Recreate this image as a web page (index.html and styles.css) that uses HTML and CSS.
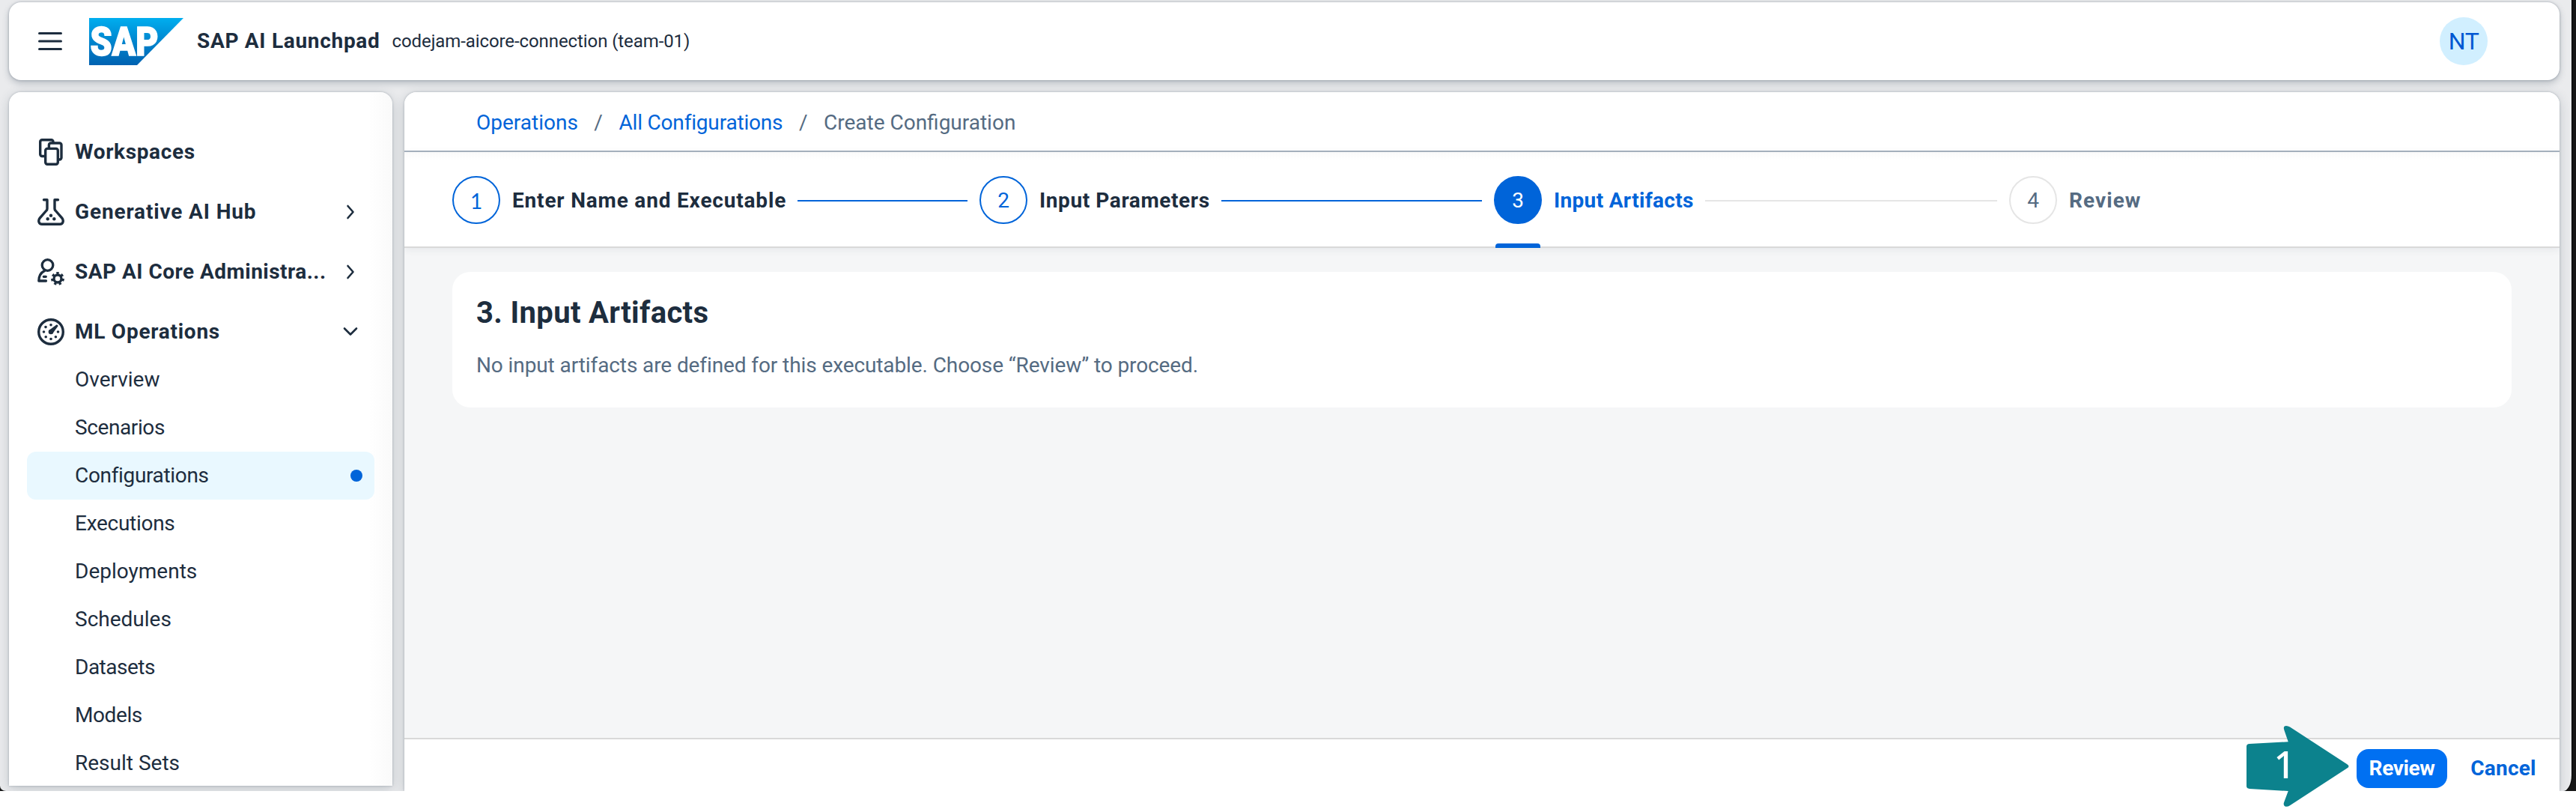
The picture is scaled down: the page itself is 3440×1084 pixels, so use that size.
FILE: index.html
```html
<!DOCTYPE html>
<html lang="en">
<head>
<meta charset="utf-8">
<title>SAP AI Launchpad</title>
<link rel="stylesheet" href="styles.css">
</head>
<body>
<div class="desktop">
  <div class="window">
    <header class="shellbar">
      <svg class="menu-icon" width="32" height="26" viewBox="0 0 32 26"><path d="M1.5 2.5h29M1.5 13h29M1.5 23.5h29" fill="none" stroke="#1d2d3e" stroke-width="3" stroke-linecap="round"/></svg>
      <svg class="logo" width="126" height="63" viewBox="0 0 126 63">
        <defs><linearGradient id="sap" x1="0" y1="0" x2="0" y2="1"><stop offset="0" stop-color="#00aeef"/><stop offset=".5" stop-color="#0085ce"/><stop offset="1" stop-color="#0062b1"/></linearGradient></defs>
        <path d="M0 0H126L64 63H0Z" fill="url(#sap)"/>
        <text class="logo-text" x="1.5" y="50" textLength="91" lengthAdjust="spacingAndGlyphs">SAP</text>
      </svg>
      <h1 class="product">SAP AI Launchpad</h1>
      <span class="tenant">codejam-aicore-connection (team-01)</span>
      <span class="avatar">NT</span>
    </header>

    <div class="body">
      <nav class="sidebar">
        <div class="group workspaces">
          <svg class="icon" viewBox="0 0 36 36"><g fill="#fff" stroke="#1d2d3e" stroke-width="3.4"><rect x="3.7" y="1.7" width="17.3" height="21.8" rx="2.5"/><rect x="15.4" y="6" width="16.6" height="22" rx="2.5"/><rect x="10.7" y="13.4" width="16.6" height="20.9" rx="2.5"/></g></svg>
          <span>Workspaces</span>
        </div>
        <div class="group genai">
          <svg class="icon" viewBox="0 0 36 36"><path d="M8.500 1.800H13V13.500Q13 15 12 16L3.200 26.200C.5 29.500 1.800 34.200 6 34.200H30C34.200 34.200 35.500 29.500 32.800 26.200L24 16Q23 15 23 13.500V1.800H27.500" fill="none" stroke="#1d2d3e" stroke-width="3.4" stroke-linecap="round" stroke-linejoin="round"/><g fill="#1d2d3e"><circle cx="18" cy="22.700" r="2.200"/><circle cx="13.700" cy="27.300" r="2.200"/><circle cx="22.300" cy="27.300" r="2.200"/></g></svg>
          <span>Generative AI Hub</span>
          <svg class="chevron" viewBox="0 0 20 20"><path d="M6.500 2L13.500 10L6.500 18"/></svg>
        </div>
        <div class="group admin">
          <svg class="icon" viewBox="0 0 36 36"><g fill="none" stroke="#1d2d3e" stroke-width="3.300" stroke-linecap="round" stroke-linejoin="round"><circle cx="13.500" cy="9" r="7.300"/><path d="M9.500 16.500C4.500 19 1.800 23.500 1.800 30H11.500M8.300 24.300H11.300"/></g><g fill="none" stroke="#1d2d3e"><circle cx="27" cy="27" r="5" stroke-width="3.400"/><circle cx="27" cy="27" r="7.300" stroke-width="3.200" pathLength="14" stroke-dasharray="1 1" transform="rotate(-102.860 27 27)"/></g></svg>
          <span>SAP AI Core Administra...</span>
          <svg class="chevron" viewBox="0 0 20 20"><path d="M6.500 2L13.500 10L6.500 18"/></svg>
        </div>
        <div class="group mlops">
          <svg class="icon" viewBox="0 0 36 36"><circle cx="18" cy="18" r="16.300" fill="none" stroke="#1d2d3e" stroke-width="3.400"/><g fill="#1d2d3e"><circle cx="18" cy="8.700" r="1.800"/><circle cx="11" cy="11.600" r="1.800"/><circle cx="8.500" cy="18" r="1.800"/><circle cx="11.200" cy="24.700" r="1.800"/><circle cx="18" cy="27.500" r="1.800"/><circle cx="24.400" cy="24.700" r="1.800"/><circle cx="27.500" cy="18" r="1.800"/><circle cx="18" cy="18" r="3.300"/><path d="M15.800 15.800L25.400 8.600Q27.800 8.400 27.400 10.600L20.200 20.200Z"/></g></svg>
          <span>ML Operations</span>
          <svg class="chevron" viewBox="0 0 20 20"><path d="M2 5.500L10 13.500L18 5.500"/></svg>
        </div>
        <ul class="items">
          <li>Overview</li>
          <li>Scenarios</li>
          <li class="selected">Configurations<i class="dot"></i></li>
          <li>Executions</li>
          <li>Deployments</li>
          <li>Schedules</li>
          <li>Datasets</li>
          <li>Models</li>
          <li>Result Sets</li>
        </ul>
      </nav>

      <main class="main">
        <div class="breadcrumb">
          <a>Operations</a><span>/</span><a>All Configurations</a><span>/</span><span>Create Configuration</span>
        </div>
        <div class="wizard">
          <div class="step done"><span class="num one">1</span><b class="label enter">Enter Name and Executable</b><i class="line"></i></div>
          <div class="step done"><span class="num">2</span><b class="label params">Input Parameters</b><i class="line"></i></div>
          <div class="step current"><span class="num">3</span><b class="label artifacts">Input Artifacts</b><i class="line"></i></div>
          <div class="step todo"><span class="num">4</span><b class="label review">Review</b></div>
        </div>
        <div class="content">
          <section class="card">
            <h2>3. Input Artifacts</h2>
            <p>No input artifacts are defined for this executable. Choose “Review” to proceed.</p>
          </section>
        </div>
        <footer class="footer">
          <button class="btn primary">Review</button>
          <button class="btn plain">Cancel</button>
        </footer>
      </main>
    </div>
  </div>
</div>
<svg class="callout" width="137" height="108" viewBox="0 0 137 108">
  <path d="M4 24L55.700 21.300L50.300 5.500Q48.500 0 53 0Q55.500 0 58 1.600L134 51Q139 53.900 134 56.800L58 106.200Q54.500 108.500 51.500 107.500Q48.500 106 50.300 101.500L55.700 87L4 84Q0 83.500 0 80.500V27.500Q0 24.300 4 24Z" fill="#0c828d"/>
  <text x="36.500" y="69.600">1</text>
</svg>
</body>
</html>
```
FILE: styles.css
```css
* { box-sizing: border-box; }

body {
  margin: 0;
  height: 1084px;
  overflow: hidden;
  background: #fff;
  color: #1d2d3e;
  font-family: Roboto, "Liberation Sans", sans-serif;
  font-size: 28px;
  line-height: 32px;
}

h1, h2, p, ul { margin: 0; padding: 0; }

.desktop {
  height: 1056px;
  padding-right: 6px;
  background: #161616;
}

.window {
  height: 1056px;
  padding: 3px 16px 0 12px;
  display: flex;
  flex-direction: column;
  gap: 16px;
  overflow: hidden;
  background: #eaebed;
  border-radius: 0 0 11px 8px / 0 0 21px 7px;
  box-shadow: 1px 0 0 #000;
}

.shellbar {
  flex: none;
  height: 104px;
  padding: 0 96px 0 39px;
  display: flex;
  align-items: center;
  background: #fff;
  border-radius: 16px;
  box-shadow: 0 0 3px rgba(34, 53, 72, .35), 0 4px 10px rgba(34, 53, 72, .26);
}

.logo { margin-left: 36px; }

.logo-text {
  font-size: 53px;
  font-weight: 900;
  fill: #fff;
  stroke: #fff;
  stroke-width: 1.6px;
}

.product {
  margin-left: 18px;
  font-size: 28px;
  font-weight: 700;
  letter-spacing: .7px;
}

.tenant {
  margin-left: 16px;
  font-size: 24px;
  letter-spacing: -.09px;
}

.avatar {
  width: 64px;
  height: 64px;
  margin-left: auto;
  border-radius: 50%;
  background: #d1efff;
  color: #0057d2;
  font-size: 32px;
  line-height: 64px;
  text-align: center;
  letter-spacing: -.5px;
}

.body {
  flex: 1;
  display: flex;
  align-items: flex-start;
  gap: 16px;
}

.sidebar {
  width: 512px;
  height: 926px;
  padding: 48px 24px 0;
  overflow: hidden;
  background: linear-gradient(to right, #fff 480px, #fafafa);
  border-radius: 16px 16px 0 0;
  box-shadow: 0 0 3px rgba(34, 53, 72, .3), 0 4px 16px rgba(34, 53, 72, .2);
}

.group {
  height: 64px;
  margin-bottom: 16px;
  padding: 0 22px 0 14px;
  display: flex;
  align-items: center;
  font-weight: 700;
}

.group.mlops { margin-bottom: 0; letter-spacing: .74px; }
.group.workspaces { letter-spacing: .64px; }
.group.genai { letter-spacing: .85px; }
.group.admin { letter-spacing: .48px; }

.icon {
  width: 36px;
  height: 36px;
  margin-right: 14px;
}

.chevron {
  width: 20px;
  height: 20px;
  margin-left: auto;
  fill: none;
  stroke: #1d2d3e;
  stroke-width: 2.6;
  stroke-linecap: round;
  stroke-linejoin: round;
}

.items { list-style: none; }

.items li {
  height: 64px;
  padding: 0 16px 0 64px;
  display: flex;
  align-items: center;
  justify-content: space-between;
  border-radius: 12px;
}

.items .selected { background: #e9f8ff; }
.items li:nth-child(2) { letter-spacing: -.4px; }
.items li:nth-child(3) { letter-spacing: -.34px; }
.items li:nth-child(4) { letter-spacing: -.28px; }
.items li:nth-child(7) { letter-spacing: -.5px; }
.items li:nth-child(8) { letter-spacing: -.4px; }

.dot {
  width: 16px;
  height: 16px;
  border-radius: 50%;
  background: #0064d9;
}

.main {
  flex: 1;
  height: 933px;
  display: flex;
  flex-direction: column;
  overflow: hidden;
  background: #f5f6f7;
  border-radius: 16px 16px 0 0;
  box-shadow: 0 0 3px rgba(34, 53, 72, .3), 0 4px 16px rgba(34, 53, 72, .2);
}

.breadcrumb {
  height: 80px;
  padding: 4px 96px 0;
  display: flex;
  align-items: center;
  gap: 21.5px;
  background: #fff;
  border-bottom: 2px solid #a8b3bf;
  color: #556b82;
}

.breadcrumb a { color: #0064d9; }
.breadcrumb a:nth-of-type(2) { letter-spacing: -.18px; }

.wizard {
  height: 128px;
  padding-left: 64px;
  display: grid;
  grid-template-columns: 704px 687px 688px 1fr;
  background: linear-gradient(#fafafa, #fff 10px);
  border-bottom: 2px solid #d9d9d9;
  box-shadow: 0 2px 10px rgba(34, 53, 72, .08);
}

.step {
  position: relative;
  height: 128px;
  padding-right: 16px;
  display: flex;
  align-items: center;
}

.num {
  width: 64px;
  height: 64px;
  border: 2px solid #0064d9;
  border-radius: 50%;
  color: #0064d9;
  line-height: 62px;
  text-align: center;
}

.num.one { font-family: Lato, sans-serif; }

.label {
  margin: 0 15px 0 16px;
  padding-top: 1px;
  font-weight: 700;
}

.enter { letter-spacing: .82px; }
.params { letter-spacing: .6px; }
.artifacts { letter-spacing: .33px; }
.review { letter-spacing: 1.05px; }

.line {
  flex: 1;
  height: 2px;
  margin-top: 2px;
  background: #0064d9;
}

.current .num { background: #0064d9; color: #fff; }
.current .label { color: #0064d9; }
.current .line { background: #e5e5e5; }

.current::after {
  content: "";
  position: absolute;
  left: 2px;
  bottom: 0;
  width: 60px;
  height: 6px;
  border-radius: 4px 4px 0 0;
  background: #0064d9;
}

.todo .num { border-color: #e5e5e5; color: #556b82; }
.todo .label { color: #556b82; }

.content {
  flex: 1;
  padding: 32px 64px 0;
}

.card {
  height: 181px;
  padding: 30px 32px;
  background: #fff;
  border-radius: 24px;
}

.card h2 {
  font-size: 40px;
  line-height: 50px;
  letter-spacing: .34px;
}

.card p {
  margin-top: 29px;
  color: #556b82;
  letter-spacing: -.1px;
}

.footer {
  flex: none;
  height: 71px;
  padding: 13px 16px 0;
  display: flex;
  justify-content: flex-end;
  gap: 16px;
  background: #fff;
  border-top: 2px solid #d9d9d9;
}

.btn {
  height: 52px;
  padding: 0;
  border: 0;
  border-radius: 16px;
  font: 700 28px/52px Roboto, "Liberation Sans", sans-serif;
}

.primary {
  width: 121px;
  background: #0070f2;
  color: #fff;
  letter-spacing: -.4px;
}

.plain {
  width: 118px;
  background: none;
  color: #0064d9;
  letter-spacing: .2px;
}

/* Pointer laid over the footer, next to the primary action */
.callout {
  position: absolute;
  left: 3000px;
  top: 969px;
}

.callout text {
  font: 500 50px "Noto Sans", sans-serif;
  fill: #fff;
}
```
